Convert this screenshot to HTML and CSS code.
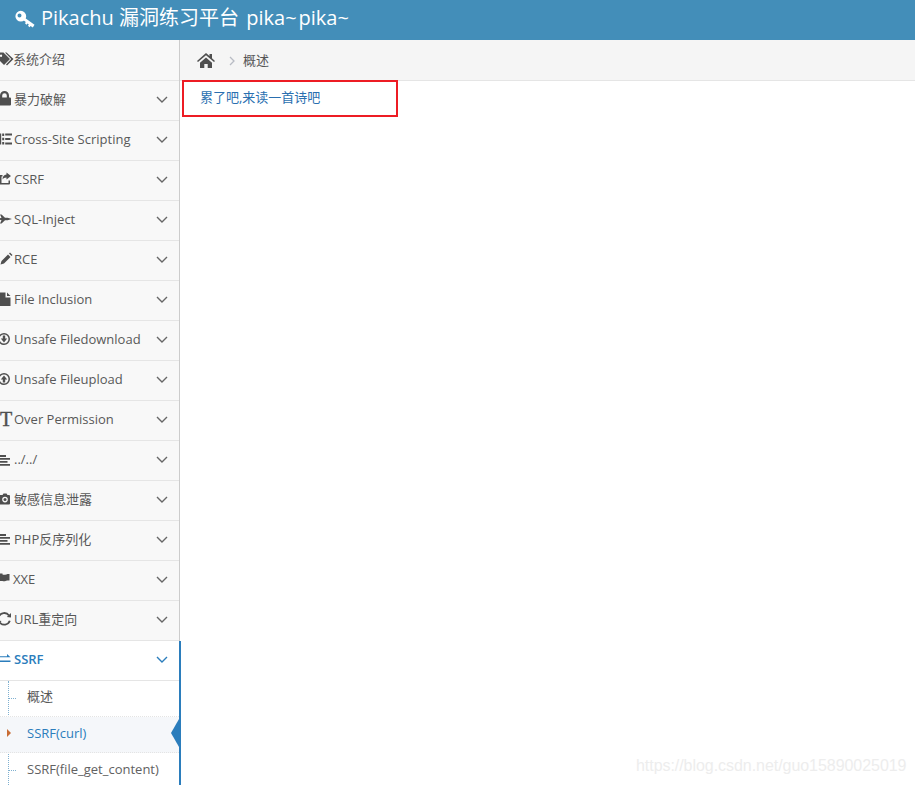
FILE: index.html
```html
<!DOCTYPE html>
<html lang="zh">
<head>
<meta charset="utf-8">
<title>Pikachu 漏洞练习平台</title>
<link rel="stylesheet" href="styles.css">
</head>
<body>
<header class="topbar">
  <svg class="key" viewBox="0 0 20 20"><path d="M5.800 1.800a5.400 5.400 0 1 1 0 10.800 5.400 5.400 0 0 1 0-10.800zM4.500 4.600a2 2 0 1 0 0 4 2 2 0 0 0 0-4z" fill-rule="evenodd"/><path d="M9 8.200L19.500 15.800 17.800 18.500 15.600 16.900 14.500 18.200 13 16.800 13.800 15.500 12.500 14.500 11.500 15.700 10 14.300 10.800 13 7.500 10.500z"/></svg>
  <span class="brand">Pikachu 漏洞练习平台<span class="tail"> pika<span class="tilde">~</span>pika<span class="tilde">~</span></span></span>
</header>
<div class="layout">
  <nav class="sidebar">
    <a class="item"><svg class="ico" viewBox="0 0 16 16"><path d="M-2 1.500h5.500l6.500 6.500-6 6-6-6zM1 3.500a1.200 1.200 0 1 0 0 2.400 1.200 1.200 0 0 0 0-2.400z" fill-rule="evenodd"/><path d="M5 1.500h1.500l7 6.500-6.500 6.500-1-1 5.200-5.500z"/></svg><span class="label tight">系统介绍</span></a>
    <a class="item"><svg class="ico" viewBox="0 0 16 16"><path d="M-1 7h1V5a4.500 4.500 0 0 1 9 0v2h1a1 1 0 0 1 1 1v6a1 1 0 0 1-1 1H-1zM2.200 7h4.600V5a2.300 2.300 0 0 0-4.600 0z" fill-rule="evenodd" transform="translate(0 -.5)"/></svg><span class="label">暴力破解</span><svg class="chev" viewBox="0 0 12 7"><path d="M1 1l5 5 5-5"/></svg></a>
    <a class="item"><svg class="ico" viewBox="0 0 16 16"><path d="M0 2.500h1.200v11H0zM2.200 2.500h2v2.500h-2zM2.200 6.700h2v2.500h-2zM2.200 11h2v2.500h-2z"/><path d="M5.200 2.500H12v2H5.200zM5.200 7H10.500v2H5.200zM5.200 11.500H12v2H5.200z"/></svg><span class="label">Cross-Site Scripting</span><svg class="chev" viewBox="0 0 12 7"><path d="M1 1l5 5 5-5"/></svg></a>
    <a class="item"><svg class="ico" viewBox="0 0 16 16"><path d="M6.500 1.500L11 5 6.500 8.500V6.500C4.500 6.500 3.200 7.200 2.500 8.500 2.500 5.500 4 3.800 6.500 3.500z"/><path d="M0 4h2.500v1.500H1.500v6.500h7V9.500H10V12.500a1 1 0 0 1-1 1H0z"/></svg><span class="label">CSRF</span><svg class="chev" viewBox="0 0 12 7"><path d="M1 1l5 5 5-5"/></svg></a>
    <a class="item"><svg class="ico" viewBox="0 0 16 16"><path d="M0 3.500h1.500L5 6.800h2.500L12 8l-4.500 1.200H5L1.500 12.500H0l1.500-3.300L0 8.800V7.200l1.500-.4z"/></svg><span class="label">SQL-Inject</span><svg class="chev" viewBox="0 0 12 7"><path d="M1 1l5 5 5-5"/></svg></a>
    <a class="item"><svg class="ico" viewBox="0 0 16 16"><path d="M1.500 10l6.500-6.500 2.500 2.500-6.500 6.500-3.500 1zM9 2.500l1-1 2.500 2.500-1 1z"/></svg><span class="label">RCE</span><svg class="chev" viewBox="0 0 12 7"><path d="M1 1l5 5 5-5"/></svg></a>
    <a class="item"><svg class="ico" viewBox="0 0 16 16"><path d="M0 1.500h5.500V6.500h5V15H0zM7 1.500l3.500 3.500H7z"/></svg><span class="label">File Inclusion</span><svg class="chev" viewBox="0 0 12 7"><path d="M1 1l5 5 5-5"/></svg></a>
    <a class="item"><svg class="ico" viewBox="0 0 16 16"><path d="M4 2a6 6 0 1 1 0 12 6 6 0 0 1 0-12zm0 1.500a4.500 4.500 0 1 0 0 9 4.500 4.500 0 0 0 0-9z" fill-rule="evenodd"/><path d="M2.800 4.500h2.400v3h2L4 11.500.8 7.500h2z"/></svg><span class="label">Unsafe Filedownload</span><svg class="chev" viewBox="0 0 12 7"><path d="M1 1l5 5 5-5"/></svg></a>
    <a class="item"><svg class="ico" viewBox="0 0 16 16"><path d="M4 2a6 6 0 1 1 0 12 6 6 0 0 1 0-12zm0 1.500a4.500 4.500 0 1 0 0 9 4.500 4.500 0 0 0 0-9z" fill-rule="evenodd"/><path d="M2.800 11.500v-3h-2L4 4.500l3.200 4h-2v3z"/></svg><span class="label">Unsafe Fileupload</span><svg class="chev" viewBox="0 0 12 7"><path d="M1 1l5 5 5-5"/></svg></a>
    <a class="item"><span class="glyph">T</span><span class="label">Over Permission</span><svg class="chev" viewBox="0 0 12 7"><path d="M1 1l5 5 5-5"/></svg></a>
    <a class="item"><svg class="ico" viewBox="0 0 16 16"><path d="M0 4h6v2H0zM0 7h10v1.800H0zM0 10h7.500v1.800H0zM0 13h10v1.800H0z"/></svg><span class="label">../../</span><svg class="chev" viewBox="0 0 12 7"><path d="M1 1l5 5 5-5"/></svg></a>
    <a class="item"><svg class="ico" viewBox="0 0 16 16"><path d="M0 4h2.500l1-1.500h3l1 1.500H9a1 1 0 0 1 1 1v7.500a1 1 0 0 1-1 1H0zM5 5.800a2.800 2.800 0 1 0 0 5.600 2.800 2.800 0 0 0 0-5.600z" fill-rule="evenodd"/><circle cx="5" cy="8.600" r="1.500"/></svg><span class="label">敏感信息泄露</span><svg class="chev" viewBox="0 0 12 7"><path d="M1 1l5 5 5-5"/></svg></a>
    <a class="item"><svg class="ico" viewBox="0 0 16 16"><path d="M0 3h6v2H0zM0 6h10v1.800H0zM0 9h7.500v1.800H0zM0 12h10v1.800H0z"/></svg><span class="label">PHP反序列化</span><svg class="chev" viewBox="0 0 12 7"><path d="M1 1l5 5 5-5"/></svg></a>
    <a class="item"><svg class="ico" viewBox="0 0 16 16"><path d="M0 2.500h2.500v1c2.300.8 4.500-.8 7-.5V9.500c-2.500-.4-4.700 1.200-7 .5H0z"/></svg><span class="label tight">XXE</span><svg class="chev" viewBox="0 0 12 7"><path d="M1 1l5 5 5-5"/></svg></a>
    <a class="item"><svg class="ico" viewBox="0 0 16 16"><path class="ring" d="M-1.200 5.800A5.800 5.800 0 0 1 9 4.500M9.800 9.800A5.800 5.800 0 0 1-.2 11.500"/><path d="M6.800 6L11 6.500V2zM1.500 10L-2 9.500V14z"/></svg><span class="label">URL重定向</span><svg class="chev" viewBox="0 0 12 7"><path d="M1 1l5 5 5-5"/></svg></a>
    <div class="group">
      <a class="item open"><svg class="ico" viewBox="0 0 16 16"><path d="M0 5.200h7V3l3.500 3.200H0zM0 9.600h10.500v1.300H0z"/></svg><span class="label">SSRF</span><svg class="chev" viewBox="0 0 12 7"><path d="M1 1l5 5 5-5"/></svg></a>
      <ul class="submenu">
        <li class="subitem">概述</li>
        <li class="subitem current">SSRF(curl)</li>
        <li class="subitem">SSRF(file_get_content)</li>
      </ul>
    </div>
  </nav>
  <main class="content">
    <div class="crumbs">
      <svg class="home" viewBox="0 0 18 15"><path d="M9 0l3.500 3V1H15v4.200L18 8l-1 1.100L9 2.200 1 9.100 0 8zM3 9.800L9 4.500l6 5.300V15h-4.300v-4H7.300v4H3z"/></svg>
      <svg class="sep" viewBox="0 0 6 10"><path d="M1 1l4 4-4 4"/></svg>
      <span class="crumb">概述</span>
    </div>
    <div class="notebox"><a class="notelink">累了吧,来读一首诗吧</a></div>
  </main>
</div>
<div class="watermark">https://blog.csdn.net/guo15890025019</div>
</body>
</html>
```
FILE: styles.css
```css
* { box-sizing: border-box; }
html, body { margin: 0; height: 100%; overflow: hidden; }
body {
  position: relative;
  background: #fff;
  font-family: "Open Sans", "Noto Sans CJK SC", sans-serif;
  font-size: 13px;
  color: #585858;
}
.topbar {
  height: 40px;
  background: #438eb9;
  display: flex;
  align-items: center;
  padding-left: 15px;
  gap: 6px;
  color: #fff;
}
.key { width: 20px; height: 20px; fill: #fff; flex: none; margin-top: -2px; }
.brand { font-size: 20px; line-height: 32px; margin-top: -4px; }
.tail { word-spacing: 2px; }
.tilde { letter-spacing: 2px; }
.layout { display: flex; height: 745px; }
.sidebar {
  width: 180px;
  flex: none;
  background: #f8f8f8;
  display: flex;
  flex-direction: column;
  border-right: 1px solid #ccc;
  padding-top: 1px;
}
.item {
  height: 40px;
  flex: none;
  display: flex;
  align-items: center;
  border-bottom: 1px solid #e5e5e5;
  padding-right: 11px;
  padding-bottom: 3px;
}
.ico {
  width: 16px;
  height: 16px;
  margin-right: -2px;
  flex: none;
  fill: #4f4f4f;
  overflow: visible;
}
.ring { fill: none; stroke: #4f4f4f; stroke-width: 1.8; }
.glyph {
  width: 14px;
  flex: none;
  font-family: "Liberation Serif", serif;
  font-size: 20px;
  font-weight: 400;
  color: #4f4f4f;
  line-height: 20px;
  -webkit-text-stroke: 0.4px #4f4f4f;
}
.label { flex: 1; line-height: 18px; height: 18px; }
.tight { margin-left: -1px; }
.chev {
  width: 12px;
  height: 7px;
  flex: none;
  fill: none;
  stroke: #666;
  stroke-width: 1.4;
}
.group {
  flex: 1;
  display: flex;
  flex-direction: column;
  margin-right: -2px;
  border-right: 2px solid #2b7dbc;
  position: relative;
  background: #fff;
}
.item.open {
  background: #fff;
  color: #2b7dbc;
  font-weight: 600;
}
.item.open .ico { fill: #2b7dbc; }
.item.open .chev { stroke: #2b7dbc; }
.submenu {
  list-style: none;
  margin: 0;
  padding: 0;
  flex: 1;
  background: #fff;
  position: relative;
}
.submenu::before {
  content: "";
  position: absolute;
  left: 8px;
  top: 0;
  bottom: 0;
  border-left: 1px dotted #7fb0d0;
}
.subitem {
  height: 36px;
  padding-left: 27px;
  line-height: 33px;
  color: #616161;
  position: relative;
  border-bottom: 1px dotted #e4e4e4;
}
.subitem::before {
  content: "";
  position: absolute;
  left: 9px;
  top: 17px;
  width: 7px;
  border-top: 1px dotted #7fb0d0;
}
.subitem:first-child { color: #585858; line-height: 31px; }
.subitem.current {
  background: #f5f7fa;
  color: #2b7dbc;
}
.subitem.current::before {
  left: 7px;
  top: 12px;
  width: 0;
  border-top: 4px solid transparent;
  border-bottom: 4px solid transparent;
  border-left: 4px solid #c86c34;
}
.subitem.current::after {
  content: "";
  position: absolute;
  right: 0;
  top: 2px;
  border-top: 14px solid transparent;
  border-bottom: 14px solid transparent;
  border-right: 8px solid #2b7dbc;
}
.content { flex: 1; min-width: 0; }
.crumbs {
  height: 41px;
  background: #f5f5f5;
  border-bottom: 1px solid #e5e5e5;
  display: flex;
  align-items: center;
  padding-left: 17px;
}
.home { width: 18px; height: 15px; fill: #4f4f4f; flex: none; }
.sep { width: 6px; height: 10px; margin: 2px 8px 0 14px; fill: none; stroke: #b8bcc4; stroke-width: 1.3; flex: none; }
.crumb { color: #555; line-height: 18px; height: 18px; margin-top: -1px; }
.notebox {
  width: 216px;
  height: 37px;
  margin: -1px 0 0 2px;
  border: 2px solid #ed1c24;
  padding-left: 16px;
  line-height: 31px;
}
.notelink { color: #2a6fb0; }
.watermark {
  position: absolute;
  left: 636px;
  top: 757px;
  font-family: "Liberation Sans", sans-serif;
  font-size: 16px;
  letter-spacing: -0.05px;
  color: #ededed;
  white-space: nowrap;
}
```
